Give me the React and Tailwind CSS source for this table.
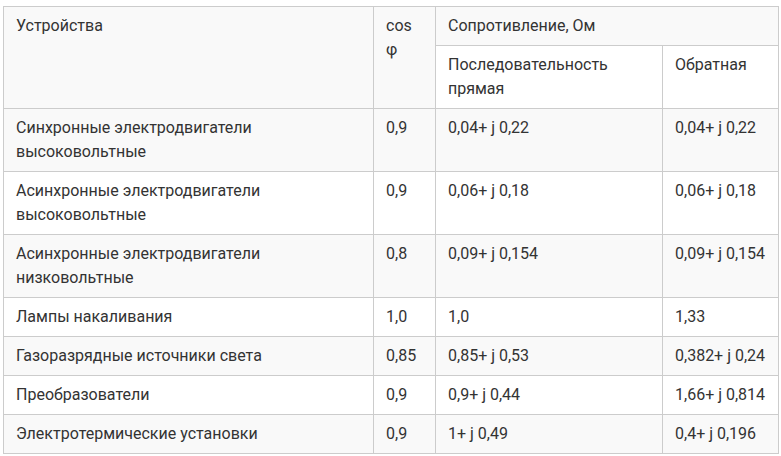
const rows = [
  ['Синхронные электродвигатели высоковольтные', '0,9', '0,04+ j 0,22', '0,04+ j 0,22'],
  ['Асинхронные электродвигатели высоковольтные', '0,9', '0,06+ j 0,18', '0,06+ j 0,18'],
  ['Асинхронные электродвигатели низковольтные', '0,8', '0,09+ j 0,154', '0,09+ j 0,154'],
  ['Лампы накаливания', '1,0', '1,0', '1,33'],
  ['Газоразрядные источники света', '0,85', '0,85+ j 0,53', '0,382+ j 0,24'],
  ['Преобразователи', '0,9', '0,9+ j 0,44', '1,66+ j 0,814'],
  ['Электротермические установки', '0,9', '1+ j 0,49', '0,4+ j 0,196'],
];

const cell = 'border border-[#cccccc] px-3 py-[7px] align-top text-left font-normal';

export default function App() {
  return (
    <div className="bg-white pl-[3px] pt-[6px] font-['Roboto',sans-serif] text-[16px] leading-6 text-[#333333]">
      <table className="w-[775px] table-fixed border-collapse">
        <colgroup>
          <col className="w-[370px]" />
          <col className="w-[62px]" />
          <col className="w-[227px]" />
          <col className="w-[116px]" />
        </colgroup>
        <tbody>
          <tr className="bg-[#f9f9f9]">
            <td rowSpan={2} className={cell}>Устройства</td>
            <td rowSpan={2} className={cell}>cos φ</td>
            <td colSpan={2} className={cell}>Сопротивление, Ом</td>
          </tr>
          <tr className="bg-white">
            <td className={cell}>Последовательность прямая</td>
            <td className={cell}>Обратная</td>
          </tr>
          {rows.map((r, i) => (
            <tr key={i} className={i % 2 === 0 ? 'bg-[#f9f9f9]' : 'bg-white'}>
              {r.map((c, j) => (
                <td key={j} className={cell}>{c}</td>
              ))}
            </tr>
          ))}
        </tbody>
      </table>
    </div>
  );
}
